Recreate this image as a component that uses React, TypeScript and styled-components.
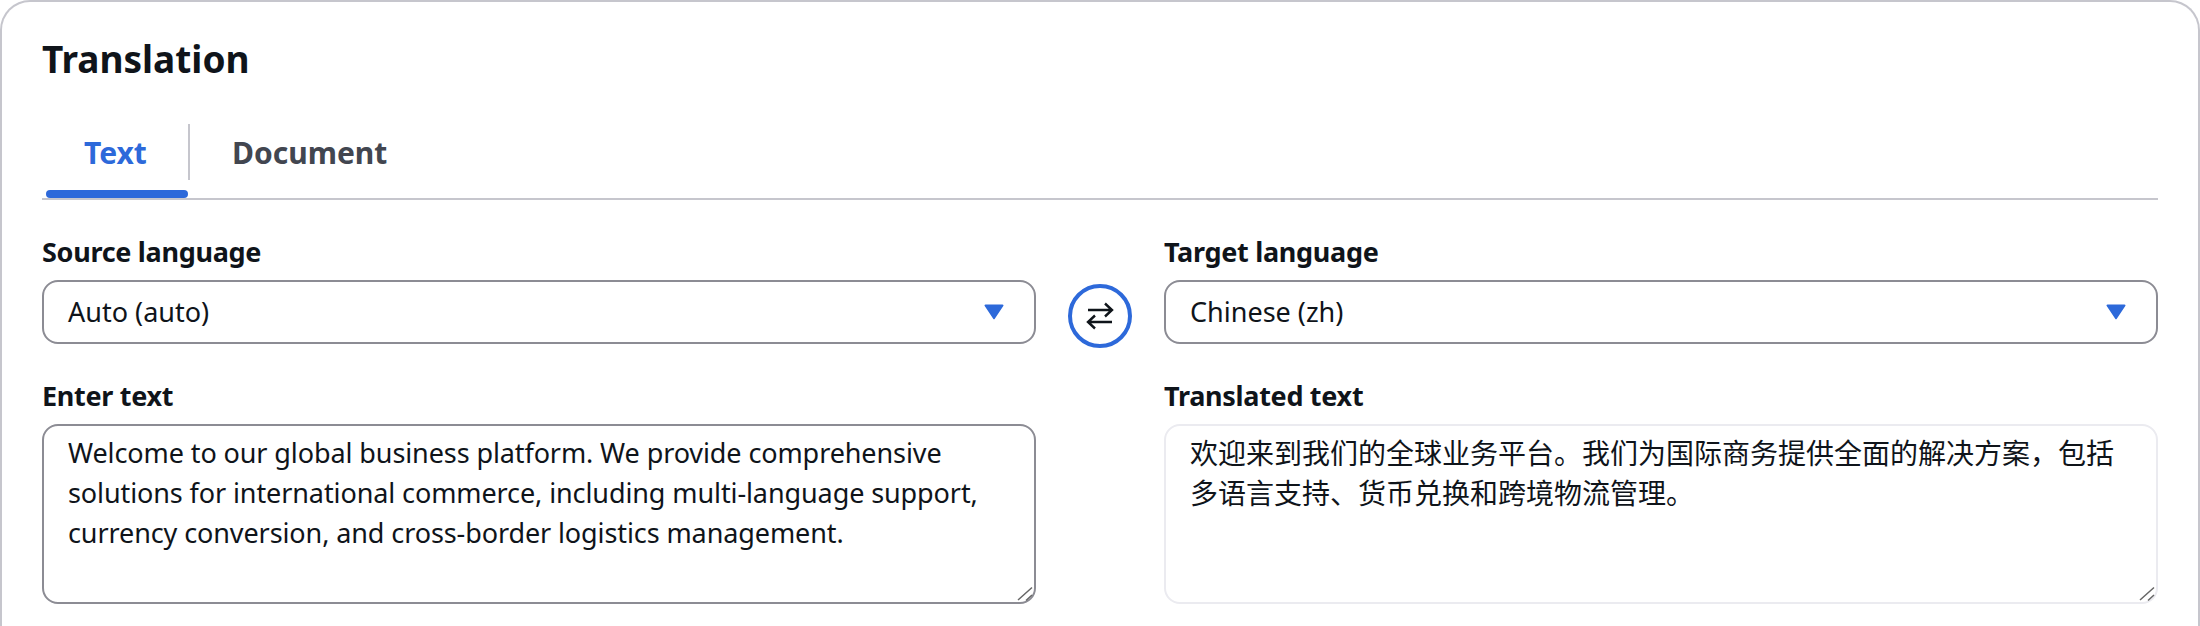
import { createGlobalStyle, styled } from 'styled-components';

const GlobalStyle = createGlobalStyle`
  * {
    box-sizing: border-box;
  }
  html,
  body {
    margin: 0;
    height: 626px;
    overflow: hidden;
    background: #fff;
  }
  body {
    font-family: 'Noto Sans', 'Noto Sans CJK SC', sans-serif;
    color: #0f141a;
  }
`;

const Card = styled.section`
  width: 2200px;
  height: 626px;
  border: 2px solid #c6c6cd;
  border-bottom: 0;
  border-radius: 30px 30px 0 0;
  padding: 35px 40px 0;
`;

const Title = styled.h2`
  margin: 0;
  font-size: 37px;
  line-height: 44px;
  font-weight: 700;
`;

const TabBar = styled.div`
  display: flex;
  align-items: flex-start;
  margin-top: 43px;
  height: 76px;
  border-bottom: 2px solid #c6c6cd;
`;

const Tab = styled.div<{ $active?: boolean }>`
  position: relative;
  height: 56px;
  padding: 0 42px;
  font-size: 30px;
  line-height: 58px;
  font-weight: 700;
  color: ${(p) => (p.$active ? '#2d69da' : '#424650')};
  & + & {
    border-left: 2px solid #c6c6cd;
  }
  ${(p) =>
    p.$active &&
    `
    margin-left: 4px;
    width: 142px;
    padding: 0 38px;
    &::after {
      content: '';
      position: absolute;
      left: 0;
      right: 0;
      bottom: -18px;
      height: 8px;
      border-radius: 4px;
      background: #2d69da;
    }
  `}
`;

const Fields = styled.div`
  display: grid;
  grid-template-columns: 994px 128px 994px;
  margin-top: 32px;
`;

const Field = styled.div<{ $col: number; $row: number }>`
  grid-column: ${(p) => p.$col};
  grid-row: ${(p) => p.$row};
  margin-bottom: 32px;
`;

const Label = styled.label`
  display: block;
  font-size: 27px;
  line-height: 40px;
  font-weight: 700;
  letter-spacing: -0.3px;
  margin-bottom: 8px;
`;

const Select = styled.div`
  display: flex;
  align-items: center;
  justify-content: space-between;
  height: 64px;
  padding: 0 24px;
  border: 2px solid #8c8c94;
  border-radius: 16px;
  font-size: 27px;
`;

const SelectValue = styled.span`
  margin-bottom: 2px;
`;

const Caret = styled.svg`
  width: 20px;
  height: 16px;
  fill: #2d69da;
  margin-right: 6px;
`;

const SwapCell = styled.div`
  grid-column: 2;
  grid-row: 1;
  display: flex;
  justify-content: center;
  padding-top: 52px;
`;

const SwapButton = styled.button`
  display: flex;
  align-items: center;
  justify-content: center;
  width: 64px;
  height: 64px;
  padding: 0;
  border: 4px solid #2d69da;
  border-radius: 50%;
  background: #fff;
  color: #0f141a;
`;

const TextBox = styled.div<{ $readOnly?: boolean }>`
  position: relative;
  height: 180px;
  padding: 7px 24px;
  border: 2px solid ${(p) => (p.$readOnly ? '#ebebf0' : '#8c8c94')};
  border-radius: 16px;
  font-size: ${(p) => (p.$readOnly ? '28px' : '27px')};
  letter-spacing: ${(p) => (p.$readOnly ? '0' : '-0.1px')};
  line-height: 40px;
`;

const Grip = styled.svg`
  position: absolute;
  right: 1px;
  bottom: 0;
  width: 16px;
  height: 16px;
  fill: none;
  stroke: #666;
  stroke-width: 1.5;
`;

const CaretIcon = () => (
  <Caret viewBox="0 0 20 16">
    <path d="M1.5 0.5h17a1 1 0 0 1 .8 1.6l-8.5 12.6a1 1 0 0 1-1.6 0L.7 2.1A1 1 0 0 1 1.5.5z" />
  </Caret>
);

const SwapIcon = () => (
  <svg width="32" height="32" viewBox="0 0 32 32" fill="none" stroke="currentColor" strokeWidth="2.4">
    <path d="M4 10h24M21 3.5l7 6.5-7 6.5" />
    <path d="M28 22H4M11 15.5L4 22l7 6.5" />
  </svg>
);

const ResizeGrip = () => (
  <Grip viewBox="0 0 16 16">
    <path d="M1 14L15 1.5M9 14.5L15 9" />
  </Grip>
);

const App = () => {
  return (
    <>
      <GlobalStyle />
      <Card>
        <Title>Translation</Title>
        <TabBar>
          <Tab $active>Text</Tab>
          <Tab>Document</Tab>
        </TabBar>
        <Fields>
          <Field $col={1} $row={1}>
            <Label>Source language</Label>
            <Select>
              <SelectValue>Auto (auto)</SelectValue>
              <CaretIcon />
            </Select>
          </Field>
          <SwapCell>
            <SwapButton>
              <SwapIcon />
            </SwapButton>
          </SwapCell>
          <Field $col={3} $row={1}>
            <Label>Target language</Label>
            <Select>
              <SelectValue>Chinese (zh)</SelectValue>
              <CaretIcon />
            </Select>
          </Field>
          <Field $col={1} $row={2}>
            <Label>Enter text</Label>
            <TextBox>
              Welcome to our global business platform. We provide comprehensive solutions for
              international commerce, including multi-language support, currency conversion, and
              cross-border logistics management.
              <ResizeGrip />
            </TextBox>
          </Field>
          <Field $col={3} $row={2}>
            <Label>Translated text</Label>
            <TextBox $readOnly>
              欢迎来到我们的全球业务平台。我们为国际商务提供全面的解决方案，包括多语言支持、货币兑换和跨境物流管理。
              <ResizeGrip />
            </TextBox>
          </Field>
        </Fields>
      </Card>
    </>
  );
};

export default App;
